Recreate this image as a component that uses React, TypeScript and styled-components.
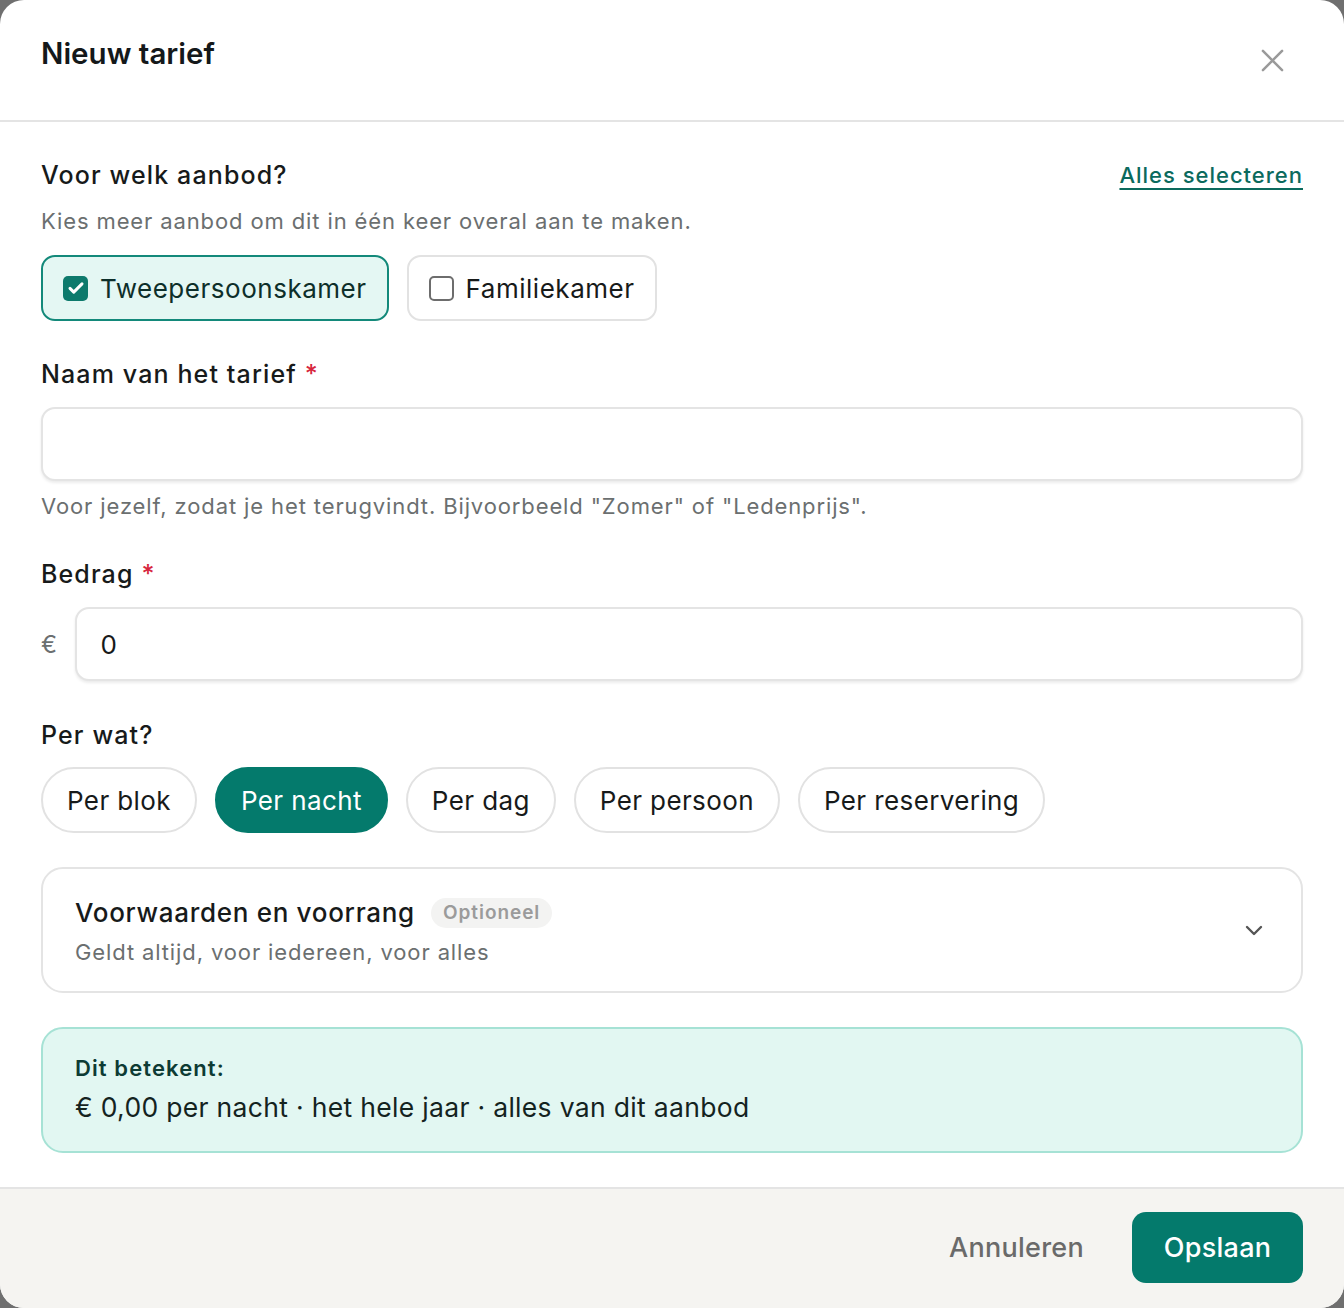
import React from "react";
import styled, { createGlobalStyle } from "styled-components";

const GlobalStyle = createGlobalStyle`
  html, body { margin: 0; padding: 0; }
  body {
    background: #6f6f6f;
    font-family: Inter, "Noto Sans", "Liberation Sans", sans-serif;
    color: #171a1a;
    -webkit-font-smoothing: antialiased;
  }
  * { box-sizing: border-box; }
`;

const Dialog = styled.div`
  width: 1344px;
  height: 1308px;
  background: #ffffff;
  border-radius: 24px;
  overflow: hidden;
  display: flex;
  flex-direction: column;
`;

const Header = styled.header`
  height: 122px;
  flex: none;
  display: flex;
  align-items: flex-start;
  justify-content: space-between;
  padding: 34px 58px 0 41px;
  border-bottom: 2px solid #e4e4e4;
`;

const Title = styled.h1`
  margin: 0;
  font-size: 29.5px;
  line-height: 38px;
  font-weight: 600;
  letter-spacing: 0;
  color: #14181a;
`;

const CloseButton = styled.button`
  border: 0;
  background: none;
  padding: 0;
  margin-top: 12px;
  width: 28px;
  height: 28px;
  display: flex;
  align-items: center;
  justify-content: center;
  color: #9a9a9a;
  cursor: pointer;
`;

const Body = styled.main`
  flex: 1;
  padding: 38px 41px 0 41px;
  display: flex;
  flex-direction: column;
`;

const LabelRow = styled.div`
  display: flex;
  align-items: center;
  justify-content: space-between;
`;

const Label = styled.div<{ $mt?: number }>`
  font-size: 25px;
  line-height: 30px;
  font-weight: 500;
  letter-spacing: 0.045em;
  color: #171a1a;
  margin-top: ${(p) => p.$mt ?? 0}px;
`;

const Required = styled.span`
  color: #d7263d;
  margin-left: 8px;
`;

const Link = styled.a`
  font-size: 22px;
  line-height: 30px;
  font-weight: 500;
  color: #0b6a5d;
  text-decoration: underline;
  text-decoration-thickness: 2px;
  text-underline-offset: 5px;
  letter-spacing: 0.045em;
  cursor: pointer;
`;

const Hint = styled.div<{ $mt: number }>`
  font-size: 22px;
  line-height: 28px;
  color: #6b6f70;
  letter-spacing: 0.04em;
  margin-top: ${(p) => p.$mt}px;
`;

const ChipRow = styled.div`
  display: flex;
  gap: 18px;
  margin-top: 20px;
`;

const Chip = styled.label<{ $checked?: boolean }>`
  height: 66px;
  display: flex;
  align-items: center;
  gap: 12px;
  padding: 0 20px;
  border-radius: 14px;
  border: 2px solid ${(p) => (p.$checked ? "#13897a" : "#e2e2e2")};
  background: ${(p) => (p.$checked ? "#e4f7f3" : "#ffffff")};
  font-size: 26px;
  letter-spacing: 0.02em;
  color: ${(p) => (p.$checked ? "#0d2f2a" : "#171a1a")};
  cursor: pointer;
`;

const Box = styled.span<{ $checked?: boolean }>`
  width: 25px;
  height: 25px;
  border-radius: 5px;
  flex: none;
  display: flex;
  align-items: center;
  justify-content: center;
  background: ${(p) => (p.$checked ? "#0d7a6c" : "#ffffff")};
  border: ${(p) => (p.$checked ? "none" : "2px solid #6d6d6d")};
`;

const Input = styled.input<{ $mt: number }>`
  width: 100%;
  height: 74px;
  margin-top: ${(p) => p.$mt}px;
  border: 2px solid #e4e4e4;
  border-radius: 14px;
  box-shadow: 0 2px 3px rgba(0, 0, 0, 0.08);
  padding: 0 24px;
  font-family: inherit;
  font-size: 26px;
  color: #171a1a;
  outline: none;
  background: #fff;
`;

const AmountRow = styled.div`
  display: flex;
  align-items: center;
  gap: 16px;
  margin-top: 18px;
`;

const Currency = styled.span`
  font-size: 24px;
  color: #6b6f70;
  width: 18px;
`;

const PillRow = styled.div`
  display: flex;
  gap: 18px;
  margin-top: 17px;
`;

const Pill = styled.button<{ $active?: boolean }>`
  height: 66px;
  margin: 0;
  padding: 0 24px;
  border-radius: 33px;
  font-family: inherit;
  font-size: 26px;
  letter-spacing: 0.015em;
  border: 2px solid ${(p) => (p.$active ? "#047a6c" : "#e2e2e2")};
  background: ${(p) => (p.$active ? "#047a6c" : "#ffffff")};
  color: ${(p) => (p.$active ? "#ffffff" : "#171a1a")};
  cursor: pointer;
`;

const Accordion = styled.div`
  margin-top: 34px;
  height: 126px;
  border: 2px solid #e4e4e4;
  border-radius: 22px;
  display: flex;
  align-items: center;
  justify-content: space-between;
  padding: 0 38px 0 32px;
`;

const AccTexts = styled.div`
  display: flex;
  flex-direction: column;
  gap: 7px;
  margin-top: 2px;
`;

const AccTitleRow = styled.div`
  display: flex;
  align-items: center;
  gap: 16px;
`;

const AccTitle = styled.span`
  font-size: 26px;
  line-height: 34px;
  font-weight: 500;
  letter-spacing: 0.027em;
  color: #171a1a;
`;

const Badge = styled.span`
  height: 30px;
  padding: 0 12px;
  border-radius: 15px;
  background: #f3f3f2;
  color: #9b9b9b;
  font-size: 19px;
  font-weight: 600;
  letter-spacing: 0.05em;
  display: flex;
  align-items: center;
`;

const AccSub = styled.span`
  font-size: 22px;
  line-height: 30px;
  color: #6b6f70;
  letter-spacing: 0.04em;
`;

const Info = styled.div`
  margin-top: 34px;
  height: 126px;
  border: 2px solid #a6e2d5;
  background: #e2f7f2;
  border-radius: 22px;
  padding: 25px 32px 0 32px;
  display: flex;
  flex-direction: column;
  gap: 8px;
`;

const InfoTitle = styled.div`
  font-size: 22px;
  line-height: 28px;
  font-weight: 600;
  color: #0d3b34;
  letter-spacing: 0.05em;
`;

const InfoLine = styled.div`
  font-size: 26.5px;
  line-height: 34px;
  letter-spacing: 0.012em;
  color: #14231f;
`;

const Footer = styled.footer`
  height: 121px;
  flex: none;
  background: #f5f4f1;
  border-top: 2px solid #e4e4e4;
  display: flex;
  align-items: center;
  justify-content: flex-end;
  gap: 48px;
  padding: 0 41px 2px 0;
`;

const GhostButton = styled.button`
  border: 0;
  background: none;
  font-family: inherit;
  font-size: 27px;
  font-weight: 500;
  letter-spacing: 0.01em;
  color: #6a6a6a;
  cursor: pointer;
  padding: 0;
`;

const PrimaryButton = styled.button`
  height: 71px;
  width: 171px;
  border: 0;
  border-radius: 14px;
  background: #047a6c;
  color: #ffffff;
  font-family: inherit;
  font-size: 27px;
  font-weight: 500;
  letter-spacing: 0.01em;
  cursor: pointer;
`;

const CheckIcon = () => (
  <svg width="18" height="18" viewBox="0 0 24 24" fill="none">
    <path d="M4 12.5l5 5L20 6.5" stroke="#fff" strokeWidth="4" strokeLinecap="round" strokeLinejoin="round" />
  </svg>
);

const XIcon = () => (
  <svg width="23" height="23" viewBox="0 0 24 24" fill="none">
    <path d="M2 2l20 20M22 2L2 22" stroke="currentColor" strokeWidth="2.6" strokeLinecap="round" />
  </svg>
);

const Chevron = () => (
  <svg width="18" height="12" viewBox="0 0 18 12" fill="none">
    <path d="M2 3l7 7 7-7" stroke="#555" strokeWidth="2.4" strokeLinecap="round" strokeLinejoin="round" />
  </svg>
);

const units = ["Per blok", "Per nacht", "Per dag", "Per persoon", "Per reservering"];

export default function App() {
  return (
    <>
      <GlobalStyle />
      <Dialog>
        <Header>
          <Title>Nieuw tarief</Title>
          <CloseButton aria-label="Sluiten">
            <XIcon />
          </CloseButton>
        </Header>
        <Body>
          <LabelRow>
            <Label>Voor welk aanbod?</Label>
            <Link>Alles selecteren</Link>
          </LabelRow>
          <Hint $mt={17}>Kies meer aanbod om dit in één keer overal aan te maken.</Hint>
          <ChipRow>
            <Chip $checked>
              <Box $checked>
                <CheckIcon />
              </Box>
              Tweepersoonskamer
            </Chip>
            <Chip>
              <Box />
              Familiekamer
            </Chip>
          </ChipRow>

          <Label $mt={38}>
            Naam van het tarief<Required>*</Required>
          </Label>
          <Input $mt={18} />
          <Hint $mt={11}>Voor jezelf, zodat je het terugvindt. Bijvoorbeeld "Zomer" of "Ledenprijs".</Hint>

          <Label $mt={39}>
            Bedrag<Required>*</Required>
          </Label>
          <AmountRow>
            <Currency>€</Currency>
            <Input $mt={0} defaultValue="0" />
          </AmountRow>

          <Label $mt={39}>Per wat?</Label>
          <PillRow>
            {units.map((u) => (
              <Pill key={u} $active={u === "Per nacht"}>
                {u}
              </Pill>
            ))}
          </PillRow>

          <Accordion>
            <AccTexts>
              <AccTitleRow>
                <AccTitle>Voorwaarden en voorrang</AccTitle>
                <Badge>Optioneel</Badge>
              </AccTitleRow>
              <AccSub>Geldt altijd, voor iedereen, voor alles</AccSub>
            </AccTexts>
            <Chevron />
          </Accordion>

          <Info>
            <InfoTitle>Dit betekent:</InfoTitle>
            <InfoLine>€ 0,00 per nacht · het hele jaar · alles van dit aanbod</InfoLine>
          </Info>
        </Body>
        <Footer>
          <GhostButton>Annuleren</GhostButton>
          <PrimaryButton>Opslaan</PrimaryButton>
        </Footer>
      </Dialog>
    </>
  );
}
